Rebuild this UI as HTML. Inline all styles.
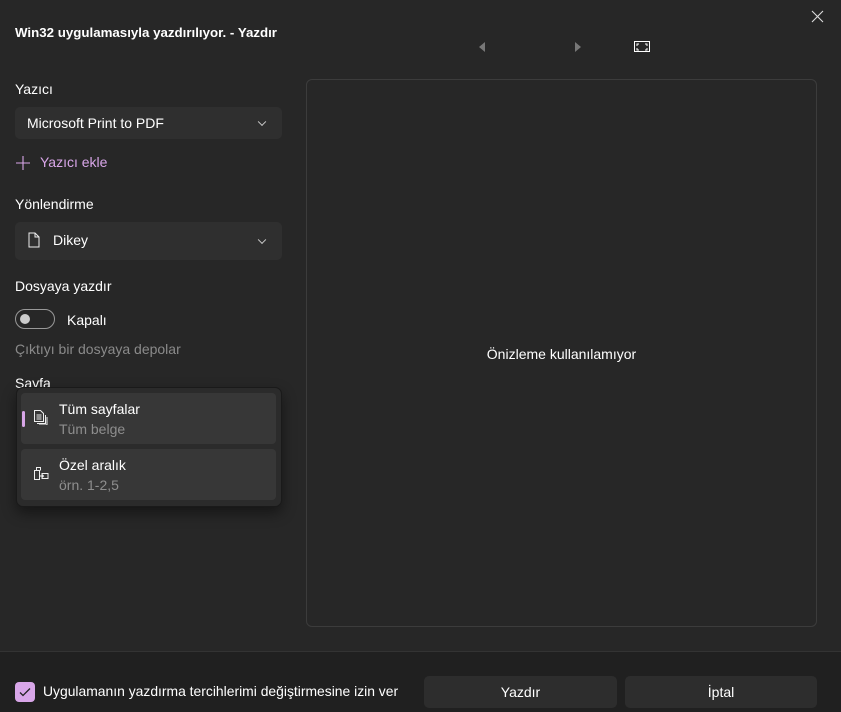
<!DOCTYPE html>
<html><head><meta charset="utf-8"><style>
*{box-sizing:border-box;margin:0;padding:0}
body{width:841px;height:712px;background:#272727;font-family:"Segoe UI","Liberation Sans",sans-serif;color:#fff;position:relative;overflow:hidden;font-size:14px}
.a{position:absolute}
.lbl{font-size:14px;color:#fff}
.dd{position:absolute;left:15px;width:267px;background:#2f2f2f;border-radius:5px}
.chev{position:absolute;right:17px;top:50%;width:6px;height:6px;border-right:1px solid #ccc;border-bottom:1px solid #ccc;transform:translateY(-70%) rotate(45deg)}
.item{position:absolute;left:21px;width:255px;height:51px;background:#373737;border-radius:4px}
</style></head><body>
<div class="a" style="left:15px;top:25px;font-size:13.3px;font-weight:bold">Win32 uygulamasıyla yazdırılıyor. - Yazdır</div>
<svg class="a" style="left:811px;top:10px" width="13" height="13"><path d="M1 1l11 11M12 1L1 12" stroke="#ddd" stroke-width="1.1"/></svg>
<div class="a" style="left:479px;top:42px;width:0;height:0;border-top:5px solid transparent;border-bottom:5px solid transparent;border-right:6px solid #777"></div>
<div class="a" style="left:575px;top:42px;width:0;height:0;border-top:5px solid transparent;border-bottom:5px solid transparent;border-left:6px solid #777"></div>
<svg class="a" style="left:634px;top:41px" width="17" height="12"><rect x="0.5" y="0.5" width="15" height="10" fill="none" stroke="#fff"/><path d="M3 5V3h2M11 3h2v2M13 7v2h-2M5 9H3V7" stroke="#fff" fill="none"/></svg>

<div class="a lbl" style="left:15px;top:81px">Yazıcı</div>
<div class="dd" style="top:107px;height:32px"><span class="a" style="left:12px;top:8px;font-size:14px">Microsoft Print to PDF</span><div class="chev"></div></div>
<svg class="a" style="left:15px;top:155px" width="16" height="16"><path d="M8 1v14M1 8h14" stroke="#d8a6e8" stroke-width="1.1"/></svg>
<div class="a" style="left:40px;top:154px;color:#d8a6e8">Yazıcı ekle</div>

<div class="a lbl" style="left:15px;top:196px">Yönlendirme</div>
<div class="dd" style="top:222px;height:38px">
<svg class="a" style="left:13px;top:10px" width="12" height="16"><path d="M1 1h6l4 4v10H1z M7 1v4h4" fill="none" stroke="#eee"/></svg>
<span class="a" style="left:38px;top:10px">Dikey</span><div class="chev"></div></div>

<div class="a lbl" style="left:15px;top:278px">Dosyaya yazdır</div>
<div class="a" style="left:15px;top:309px;width:40px;height:20px;border:1px solid #999;border-radius:10px"><div class="a" style="left:4px;top:4px;width:10px;height:10px;border-radius:5px;background:#ccc"></div></div>
<div class="a" style="left:67px;top:312px">Kapalı</div>
<div class="a" style="left:15px;top:341px;color:#8a8a8a">Çıktıyı bir dosyaya depolar</div>
<div class="a lbl" style="left:15px;top:375px">Sayfa</div>

<div class="a" style="left:16px;top:387px;width:266px;height:120px;background:#2b2b2b;border:1px solid #1a1a1a;border-radius:7px;box-shadow:0 6px 14px rgba(0,0,0,.45)"></div>
<div class="item" style="top:393px"></div>
<div class="a" style="left:22px;top:411px;width:3px;height:16px;border-radius:2px;background:#d8a6e8"></div>
<svg class="a" style="left:33px;top:409px" width="15" height="16"><path d="M1.5 1.5h6l3 3v8h-9z M4 14.5h8.5V6 M6 16h8V8" fill="none" stroke="#eee"/><path d="M3.5 6h5M3.5 8h5M3.5 10h5" stroke="#eee"/></svg>
<div class="a" style="left:59px;top:401px">Tüm sayfalar</div>
<div class="a" style="left:59px;top:421px;color:#8e8e8e">Tüm belge</div>
<div class="item" style="top:449px"></div>
<svg class="a" style="left:33px;top:466px" width="16" height="14"><path d="M1.5 4.5h5v9h-5z M3.5 4.5V1.5h4v3 M9 7.5h6v5H9z M6.5 10h4M9 8.5l1.5 1.5L9 11.5" fill="none" stroke="#eee"/></svg>
<div class="a" style="left:59px;top:457px">Özel aralık</div>
<div class="a" style="left:59px;top:477px;color:#8e8e8e">örn. 1-2,5</div>

<div class="a" style="left:306px;top:79px;width:511px;height:548px;border:1px solid #3c3c3c;border-radius:6px"></div>
<div class="a" style="left:306px;top:346px;width:511px;text-align:center;font-size:14px">Önizleme kullanılamıyor</div>

<div class="a" style="left:0;top:651px;width:841px;height:61px;background:#202020;border-top:1px solid #333"></div>
<div class="a" style="left:15px;top:682px;width:20px;height:20px;background:#d8a6e8;border-radius:4px"><svg width="20" height="20"><path d="M5 10.5l3 3 7-7" stroke="#222" stroke-width="1.3" fill="none"/></svg></div>
<div class="a" style="left:43px;top:683px;font-size:13.9px">Uygulamanın yazdırma tercihlerimi değiştirmesine izin ver</div>
<div class="a" style="left:424px;top:676px;width:193px;height:32px;background:#2d2d2d;border-radius:5px;text-align:center;line-height:32px">Yazdır</div>
<div class="a" style="left:625px;top:676px;width:192px;height:32px;background:#2d2d2d;border-radius:5px;text-align:center;line-height:32px">İptal</div>
</body></html>
